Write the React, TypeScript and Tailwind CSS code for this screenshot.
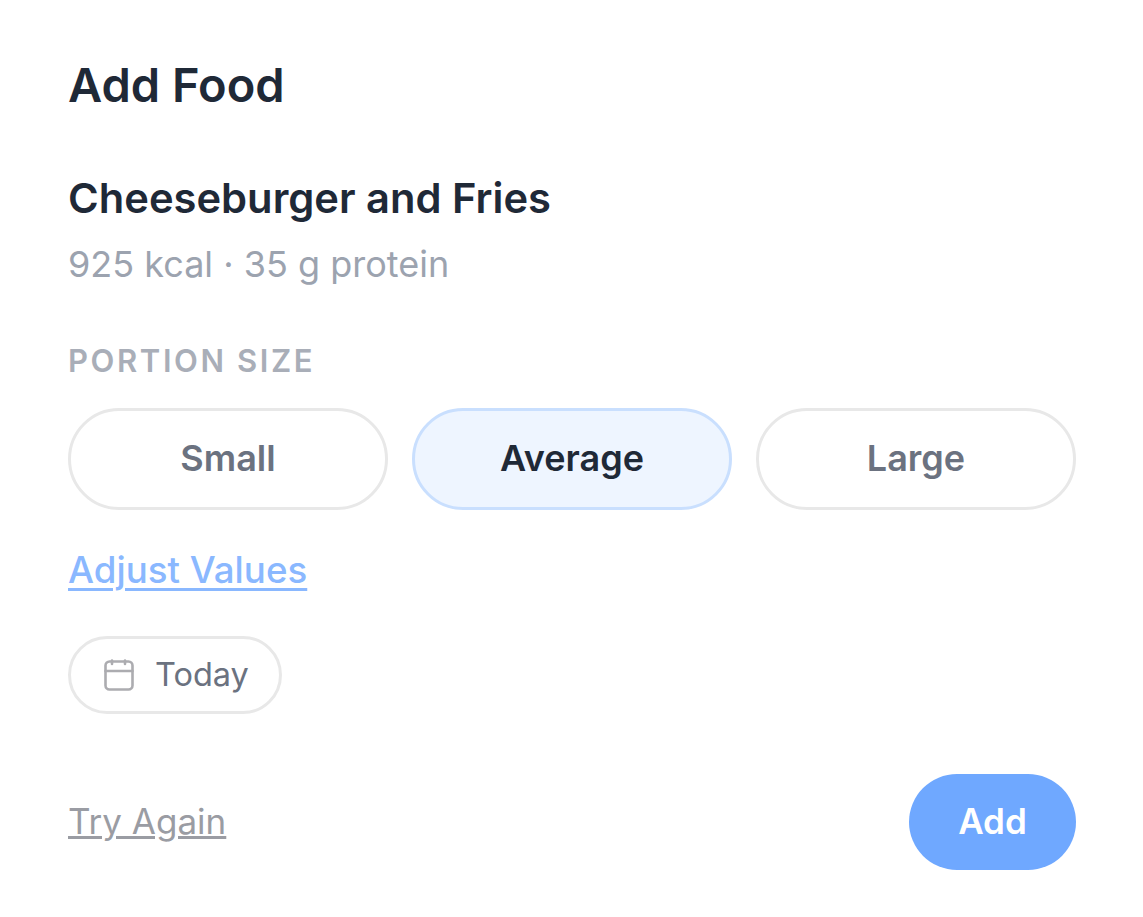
import React from "react";

function Portion({ label, active }: { label: string; active?: boolean }) {
  return (
    <button
      className={
        active
          ? "h-[102px] flex-1 rounded-[51px] border-[3px] border-[#c9dffe] bg-[#eef5ff] pb-[2px] text-[36px] font-semibold text-[#1f2937]"
          : "h-[102px] flex-1 rounded-[51px] border-[3px] border-[#e8e8e8] bg-white pb-[2px] text-[36px] font-semibold text-[#6b7280]"
      }
    >
      {label}
    </button>
  );
}

export default function App() {
  return (
    <div className="h-[917px] w-[1143px] bg-white pl-[68px] pr-[67px] pt-[57px] font-['Inter',sans-serif]">
      <h1 className="text-[47px] font-semibold leading-[56px] text-[#1f2937]">Add Food</h1>
      <h2 className="mt-[61px] text-[41.7px] font-semibold leading-[48px] text-[#1f2937]">Cheeseburger and Fries</h2>
      <p className="mt-[20px] text-[36px] leading-[44px] text-[#9ca3af]">925 kcal · 35 g protein</p>
      <div className="mt-[55px] text-[31px] font-semibold leading-[40px] tracking-[2.6px] text-[#a9aeb8]">PORTION SIZE</div>
      <div className="mt-[27px] flex gap-[24px]">
        <Portion label="Small" />
        <Portion label="Average" active />
        <Portion label="Large" />
      </div>
      <a className="mt-[38px] block w-fit text-[36.7px] font-medium leading-[44px] text-[#8ab8ff] underline decoration-[3px] underline-offset-[5px]">Adjust Values</a>
      <div className="mt-[44px] flex h-[78px] w-fit items-center gap-[21px] rounded-[39px] border-[3px] border-[#e8e8e8] pl-[33px] pr-[30px]">
        <svg width="30" height="32" viewBox="0 0 30 32" fill="none" stroke="#acacb0" strokeWidth="2.6" strokeLinecap="round" strokeLinejoin="round">
          <rect x="1.5" y="2.5" width="27" height="28" rx="4" />
          <path d="M1.5 12h27M8 1.5v3.5M21 1.5v3.5" />
        </svg>
        <span className="text-[32.5px] leading-[44px] text-[#6b7280]">Today</span>
      </div>
      <div className="mt-[60px] flex items-center justify-between">
        <a className="mb-[2px] text-[35px] leading-[44px] text-[#9a9ca3] underline">Try Again</a>
        <button className="h-[96px] w-[167px] rounded-[48px] bg-[#6fa8ff] pb-[1px] text-[35px] font-semibold text-white">Add</button>
      </div>
    </div>
  );
}
